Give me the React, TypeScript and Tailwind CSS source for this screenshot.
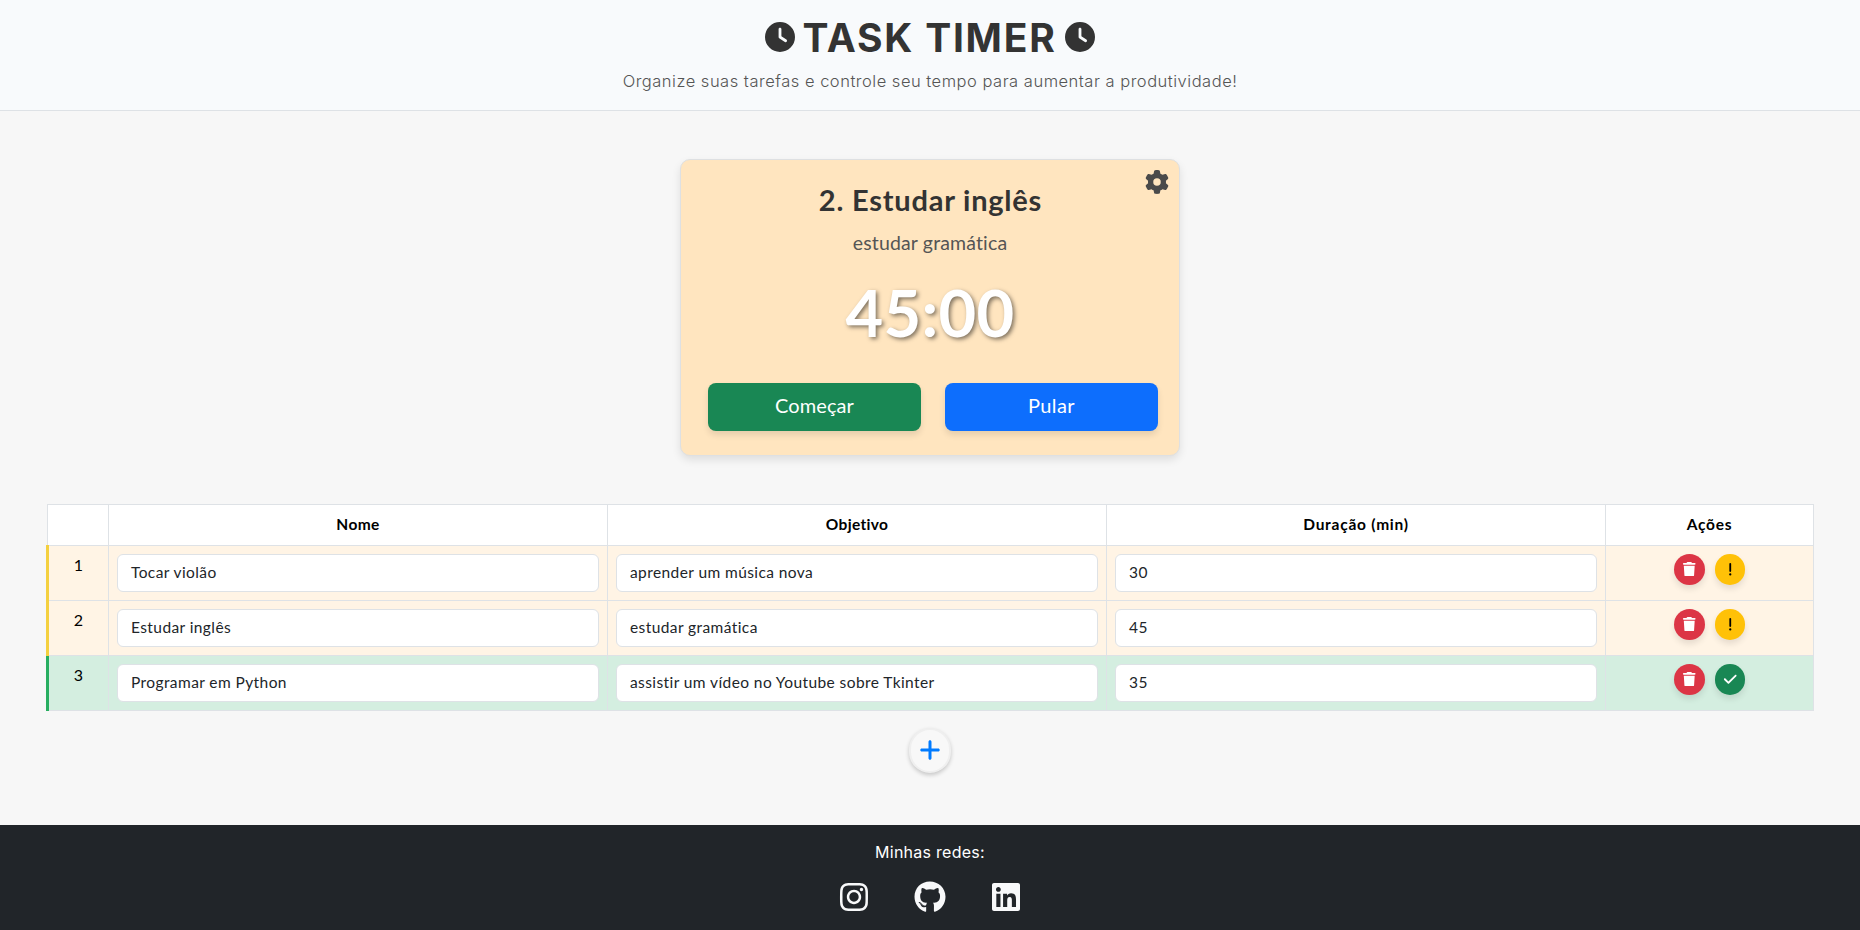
import { FaCheck, FaClock, FaExclamation, FaGear, FaGithub, FaInstagram, FaLinkedin, FaPlus, FaTrash } from "react-icons/fa6";

type Task = { name: string; goal: string; minutes: string; done: boolean };

const tasks: Task[] = [
  { name: "Tocar violão", goal: "aprender um música nova", minutes: "30", done: false },
  { name: "Estudar inglês", goal: "estudar gramática", minutes: "45", done: false },
  { name: "Programar em Python", goal: "assistir um vídeo no Youtube sobre Tkinter", minutes: "35", done: true },
];

const columns = [
  { label: "Nome", className: "w-[499px] tracking-[0.35px]" },
  { label: "Objetivo", className: "w-[499px] tracking-[0.3px]" },
  { label: "Duração (min)", className: "w-[499px] tracking-[0.75px]" },
  { label: "Ações", className: "w-[208px] tracking-[0.75px]" },
];

function Field({ value }: { value: string }) {
  return (
    <div className="flex h-[38px] items-center rounded-md border border-[#dee2e6] bg-white pl-[13px] text-[15.5px] tracking-[0.41px] text-[#212529]">
      {value}
    </div>
  );
}

function TaskRow({ task, index }: { task: Task; index: number }) {
  const bg = task.done ? "bg-[#d4eee0]" : "bg-[#fff4e5]";
  const cell = `border-r border-b border-[#dee2e6] ${bg}`;
  return (
    <div className="-ml-px flex h-[55px]">
      <div className={`w-[3px] shrink-0 ${task.done ? "bg-[#27ae60]" : "bg-[#f4d03f]"} ${index === 0 ? "-mt-px h-[56px]" : ""}`} />
      <div className={`${cell} w-[60px] shrink-0 pt-[7px] text-center text-[16px] leading-6 text-black`}>{index + 1}</div>
      {[task.name, task.goal, task.minutes].map((value) => (
        <div key={value} className={`${cell} w-[499px] shrink-0 p-2`}>
          <Field value={value} />
        </div>
      ))}
      <div className={`${cell} flex w-[208px] shrink-0 justify-center gap-[10px] pt-2`}>
        <button className="flex h-[31px] w-[31px] items-center justify-center rounded-full bg-[#dc3545] pb-px text-white shadow-[0_4px_6px_rgba(0,0,0,0.1)]">
          <FaTrash className="size-[14.5px]" />
        </button>
        <button
          className={`flex h-[31px] w-[30px] items-center justify-center rounded-full pb-px shadow-[0_4px_6px_rgba(0,0,0,0.1)] ${task.done ? "bg-[#198754] text-white" : "bg-[#ffc107] text-black"}`}
        >
          {task.done ? <FaCheck className="size-[14.5px]" /> : <FaExclamation className="size-[14.5px]" />}
        </button>
      </div>
    </div>
  );
}

export default function App() {
  return (
    <div className="flex h-[930px] w-full flex-col overflow-hidden bg-[#f7f7f7] font-['Lato','Open_Sans',sans-serif]">
      <header className="flex h-[111px] shrink-0 flex-col items-center border-b border-[#dee2e6] bg-[#f8fafc] pt-[14px] font-['Inter',sans-serif]">
        <h1 className="flex h-12 items-center justify-center text-[39px] leading-[48px] font-bold text-[#333]">
          <FaClock className="mb-[2px] size-[30px]" />
          <span className="mr-2 ml-[7px] tracking-[1.75px] whitespace-nowrap">TASK TIMER</span>
          <FaClock className="mb-[2px] size-[30px]" />
        </h1>
        <p className="mt-[7px] text-[16.5px] leading-6 font-light tracking-[0.51px] whitespace-nowrap text-[#555]">
          Organize suas tarefas e controle seu tempo para aumentar a produtividade!
        </p>
      </header>

      <main className="flex flex-1 flex-col items-center pt-12">
        <section className="relative flex h-[297px] w-[500px] shrink-0 flex-col items-center rounded-[10px] border border-[#dee0e2] bg-[#ffe5bf] pt-[23px] shadow-[0_4px_8px_rgba(0,0,0,0.1)]">
          <button className="absolute top-[10px] right-[10px]">
            <FaGear className="size-6 text-[#4a4a4a]" />
          </button>
          <h2 className="pl-px text-[29px] leading-[34px] font-bold tracking-[0.78px] text-[#333]">2. Estudar inglês</h2>
          <p className="mt-[14px] text-[19.5px] leading-6 tracking-[0.15px] text-[#555]">estudar gramática</p>
          <div className="mt-[21px] text-[65px] leading-[72px] font-bold tracking-[0.3px] text-white [text-shadow:2px_2px_4px_rgba(0,0,0,0.5)]">45:00</div>
          <div className="mt-[35px] flex gap-6 pl-[5px] text-[20px] text-white">
            <button className="h-12 w-[213px] rounded-lg bg-[#198754] pb-[4px] pl-px tracking-[0.1px] shadow-[0_4px_6px_rgba(0,0,0,0.1)]">Começar</button>
            <button className="h-12 w-[213px] rounded-lg bg-[#0d6efd] pb-[4px] pl-px tracking-[0.4px] shadow-[0_4px_6px_rgba(0,0,0,0.1)]">Pular</button>
          </div>
        </section>

        <section className="mt-[48px] ml-[1px] w-[1767px] shrink-0">
          <div className="flex h-[42px] border-y border-l border-[#dee2e6] bg-white text-[15.5px] font-bold text-black">
            <div className="w-[61px] shrink-0 border-r border-[#dee2e6]" />
            {columns.map((c) => (
              <div key={c.label} className={`flex shrink-0 items-center justify-center border-r border-[#dee2e6] pb-px ${c.className}`}>
                {c.label}
              </div>
            ))}
          </div>
          {tasks.map((task, i) => (
            <TaskRow key={task.name} task={task} index={i} />
          ))}
        </section>

        <button className="mt-[17px] flex h-[45px] w-[42px] shrink-0 items-center justify-center rounded-full border-2 border-[#efefef] bg-[#f8f8f8] shadow-[0_2px_4px_rgba(0,0,0,0.2)]">
          <FaPlus className="mb-px size-6 text-[#007bff]" />
        </button>
      </main>

      <footer className="flex h-[105px] shrink-0 flex-col items-center bg-[#212529] pt-[15px] text-[#f8f9fa]">
        <p className="font-['Inter',sans-serif] text-[16px] leading-6 tracking-[0.27px] text-white">Minhas redes:</p>
        <div className="mt-[17px] flex h-8 items-center gap-[44px]">
          <FaInstagram className="size-8" />
          <FaGithub className="size-8" />
          <FaLinkedin className="size-8" />
        </div>
      </footer>
    </div>
  );
}
